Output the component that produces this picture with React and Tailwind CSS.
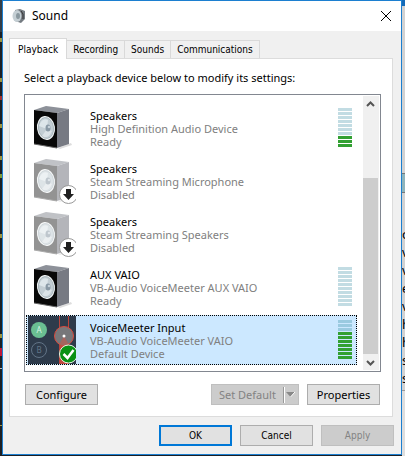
import React, { useState } from "react";

const FONT = "font-['Noto_Sans','Open_Sans',sans-serif]";
const COMPACT = "font-['DejaVu_Sans_Condensed','DejaVu_Sans',sans-serif] text-[10px]";

const devices = [
  { name: "Speakers", detail: "High Definition Audio Device", status: "Ready", level: 3, kind: "speaker" },
  { name: "Speakers", detail: "Steam Streaming Microphone", status: "Disabled", kind: "disabled" },
  { name: "Speakers", detail: "Steam Streaming Speakers", status: "Disabled", kind: "disabled" },
  { name: "AUX VAIO", detail: "VB-Audio VoiceMeeter AUX VAIO", status: "Ready", level: 0, kind: "speaker" },
  { name: "VoiceMeeter Input", detail: "VB-Audio VoiceMeeter VAIO", status: "Default Device", level: 7, kind: "mixer" },
];

function SpeakerIcon({ disabled }) {
  return (
    <svg className="block size-12 shrink-0" viewBox="0 0 48 48" aria-hidden="true">
      <g opacity={disabled ? 0.55 : 1}>
        <path d="M30 44 L43 39 L44 41 L32 45Z" fill="#ddd" />
        <path d="M6 6 L18 2 L41 5 L29 9Z" fill="#8d9199" />
        <path d="M29 9 L41 5 V40 L29 44Z" fill="#777a83" />
        <path d="M6 6 L29 9 V44 L6 40Z" fill={disabled ? "#3c3c3c" : "#080808"} />
        <path d="M6 40 L29 44" stroke="#666" />
        <ellipse cx="18" cy="24" rx="9" ry="12" transform="rotate(-8 18 24)" fill="#eef2f3" />
        <ellipse cx="18" cy="24" rx="7.5" ry="10.5" transform="rotate(-8 18 24)" fill="#c3ced4" stroke="#9ba9b1" strokeWidth=".7" />
        <path d="M19 25 L11 22 Q14 13 20 16Z" fill="#dde6ea" />
        <path d="M19 25 L14 32 Q20 36 24 27Z" fill="#dbe3e7" />
        <ellipse cx="20" cy="24" rx="2.5" ry="3.5" fill="#8999a5" />
        <circle cx="21" cy="23" r="1.3" fill="#c5d1d9" />
      </g>
      {disabled && (
        <g>
          <circle cx="40.500" cy="37.500" r="9" fill="#fff" stroke="#999" />
          <path d="M38 32h5v5h3l-5.500 6-5.500-6h3z" fill="#202020" />
        </g>
      )}
    </svg>
  );
}

function MixerIcon() {
  return (
    <svg className="block size-12 shrink-0" viewBox="0 0 48 48" aria-hidden="true">
      <path d="M0 0h48v48H0z" fill="#2e3b4b" />
      <path d="M31 28h10v20h-10z" fill="#c04a3f" />
      <path d="M31.500 0v48M40.500 0v48" stroke="#b8433a" />
      <circle cx="11" cy="14" r="8" fill="#6abf92" />
      <text x="11" y="17" textAnchor="middle" fontSize="8" fill="#d8f5e5" className="font-['Noto_Sans']">A</text>
      <circle cx="11" cy="34" r="7.500" fill="none" stroke="#627487" />
      <text x="11" y="37" textAnchor="middle" fontSize="8" fill="#627487" className="font-['Noto_Sans']">B</text>
      <circle cx="36" cy="20" r="9.500" fill="#77777a" stroke="#dc4a3c" />
      <path d="M36 20 L31.500 28 Q36 31 40.500 28Z" fill="#a5655f" />
      <circle cx="36" cy="20" r="1.500" fill="#fff" />
      <circle cx="40.500" cy="38" r="9" fill="#099114" stroke="#e9f6e9" />
      <path d="M35.500 38l4 4 6-8" fill="none" stroke="#fff" strokeWidth="2.500" />
    </svg>
  );
}

function Meter({ level, selected }) {
  return (
    <div className="flex w-3.5 flex-col gap-px" role="meter" aria-label="Level" aria-valuemin={0} aria-valuemax={10} aria-valuenow={level}>
      {Array.from({ length: 10 }, (_, i) => (
        <span key={i} className={`h-[3px] ${i >= 10 - level ? "bg-[#32a032]" : selected ? "bg-[#9acae0]" : "bg-[#c2dce3]"}`} />
      ))}
    </div>
  );
}

function Button({ children, variant = "normal", disabled, compact }) {
  const look =
    variant === "primary"
      ? "border-2 border-[#0078d7] bg-[#e1e1e1]"
      : disabled
        ? "border border-[#bfbfbf] bg-[#cccccc] text-[#838383]"
        : "border border-[#adadad] bg-[#e1e1e1]";
  return (
    <button type="button" disabled={disabled} className={`flex h-[21px] w-[73px] items-center justify-center ${look} ${compact ? COMPACT : ""}`}>
      {children}
    </button>
  );
}

export default function App() {
  const [tab, setTab] = useState("Playback");
  const [selected, setSelected] = useState(4);
  return (
    <div className={`flex min-h-screen bg-[#1c1f24] text-[11px] leading-[13px] text-black ${FONT}`}>
      <div className="flex w-0.5 shrink-0 flex-col" aria-hidden="true">
        <div className="h-8 bg-[#343e48]" />
        <div className="mt-1.5 h-1 bg-[#9c9340]" />
        <div className="mt-9 h-1 bg-[#9c9340]" />
        <div className="mt-3.5 h-1 bg-[#a03030]" />
        <div className="mt-6 h-1 bg-[#9c9340]" />
        <div className="mt-7 h-1 bg-[#9c9340]" />
        <div className="mt-3.5 h-1 bg-[#7e9a38]" />
        <div className="mt-14 h-1 bg-[#9c9340]" />
        <div className="mt-24 h-1 bg-[#9c9340]" />
        <div className="mt-2.5 h-2 bg-[#c01838]" />
        <div className="mt-3 h-px bg-[#bbb]" />
        <div className="mt-14 h-px bg-[#9c9340]" />
      </div>
      <main className="mb-px flex min-w-0 grow flex-col border border-[#1c7fd0] bg-[#f0f0f0]">
        <header className="flex h-[30px] items-center bg-white pr-2.5 pl-[9px]">
          <svg className="size-3.5" viewBox="0 0 14 14" aria-hidden="true">
            <path d="M3 1L8 0l5 2v8l-4 4-6-2z" fill="#747b81" />
            <ellipse cx="5" cy="7" rx="4.500" ry="6" fill="#c4ced3" />
            <ellipse cx="6" cy="7" rx="2" ry="3" fill="#8a989f" />
            <path d="M9 2l2 3v5" stroke="#333" fill="none" />
          </svg>
          <h1 className="grow pl-1.5 text-xs">Sound</h1>
          <button type="button" aria-label="Close">
            <svg className="size-2.5" viewBox="0 0 10 10"><path d="M0 0l10 10M10 0L0 10" stroke="#000" /></svg>
          </button>
        </header>
        <div className="flex grow flex-col px-1.5 pt-[7px]">
          <div className={`flex items-end ${COMPACT}`} role="tablist">
            {["Playback", "Recording", "Sounds", "Communications"].map((t) => (
              <button key={t} type="button" role="tab" aria-selected={t === tab} onClick={() => setTab(t)}
                className={t === tab ? "relative z-10 -mb-px h-[21px] border border-b-0 border-[#d9d9d9] bg-white px-2" : "h-[18px] border border-b-0 border-l-0 border-[#d9d9d9] px-1.5"}>
                {t}
              </button>
            ))}
          </div>
          <section className="mr-0.5 border border-[#dcdcdc] bg-white pt-3 pr-[11px] pb-[11px] pl-[14px]">
            <p>Select a playback device below to modify its settings:</p>
            <div className="mt-2.5 flex border border-[#828790] p-px">
              <ul className="flex min-w-0 grow flex-col gap-[3px] pt-[7px] pb-[5px]">
                {devices.map((d, i) => (
                  <li key={i} onClick={() => setSelected(i)} className={`flex h-[50px] border border-dotted pl-px ${i === selected ? "border-black bg-[#cce8ff]" : "border-transparent"}`}>
                    {d.kind === "mixer" ? <MixerIcon /> : <SpeakerIcon disabled={d.kind === "disabled"} />}
                    <div className="grow pt-[5px] pl-[14px] text-[#808080]">
                      <p className="text-black">{d.name}</p>
                      <p>{d.detail}</p>
                      <p>{d.status}</p>
                    </div>
                    <div className="pt-1 pr-1">{d.level !== undefined && <Meter level={d.level} selected={i === selected} />}</div>
                  </li>
                ))}
              </ul>
              <div className="ml-1.5 flex w-4 flex-col bg-[#f0f0f0]">
                <svg className="size-4" viewBox="0 0 16 16"><path d="M4 10l3.500-3.500L11 10" fill="none" stroke="#555" strokeWidth="2" /></svg>
                <div className="mt-[66px] mr-px grow bg-[#cdcdcd]" />
                <svg className="size-4" viewBox="0 0 16 16"><path d="M4 7l3.500 3.500L11 7" fill="none" stroke="#555" strokeWidth="2" /></svg>
              </div>
            </div>
            <div className="mt-3 flex items-center gap-2 px-px">
              <Button>Configure</Button>
              <div className="grow" />
              <button type="button" disabled className="flex h-[21px] w-[88px] items-center border border-[#bfbfbf] bg-[#cccccc] pl-[7px] text-[#838383]">
                Set Default
                <svg className="ml-auto h-4 w-4" viewBox="0 0 16 16"><path d="M1.500 0v16" stroke="#999" /><path d="M2.500 0v16" stroke="#fff" /><path d="M4 5h9L8.500 10z" fill="#888" /><path d="M13 5L8.500 10" stroke="#fff" /></svg>
              </button>
              <Button>Properties</Button>
            </div>
          </section>
          <footer className="mt-2 flex justify-end gap-2 pr-px pb-2">
            <Button variant="primary" compact>OK</Button>
            <Button compact>Cancel</Button>
            <Button disabled compact>Apply</Button>
          </footer>
        </div>
      </main>
      <div className="flex w-[3px] shrink-0 flex-col overflow-hidden bg-[#d2d2d2]">
        <div className="h-1.5 bg-[#1469b6]" />
        <div className="mt-[167px] h-5 border-y border-[#777] bg-[#8fb4bb]" />
        <div className="mt-8 flex flex-col text-[13px] leading-[18px]">
          {["o", "v", "v", "e", "v", "h", "h", "s", "s"].map((c, i) => (
            <span key={i}>{c}</span>
          ))}
        </div>
        <div className="mt-[3px] grow border-t border-[#999] bg-[#dedede]" />
      </div>
    </div>
  );
}
